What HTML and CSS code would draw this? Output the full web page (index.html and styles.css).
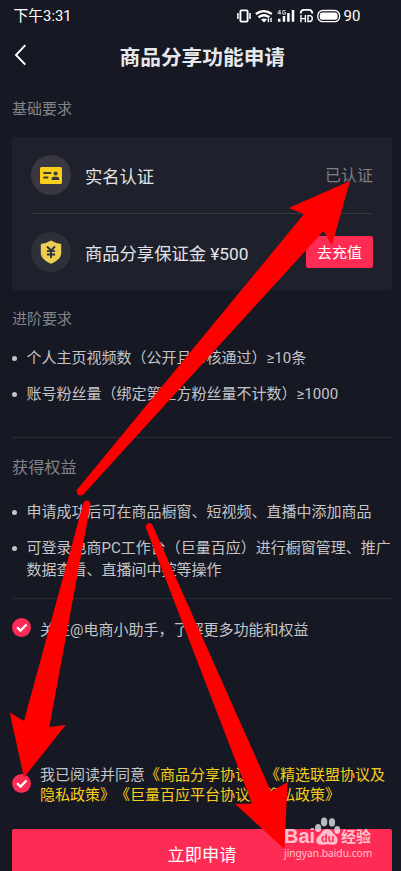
FILE: index.html
```html
<!DOCTYPE html>
<html lang="zh-CN">
<head>
<meta charset="utf-8">
<title>商品分享功能申请</title>
<link rel="stylesheet" href="styles.css">
</head>
<body>
<div class="screen">
  <div class="status">
    <span class="time">下午3:31</span>
    <svg class="status-icons" width="104" height="16" viewBox="0 0 104 16" fill="none" stroke="#fff">
      <rect x="3.400" y="2.400" width="7.200" height="11.200" rx="1" stroke-width="1.900"/>
      <path d="M.9 5v6M13 5v6" stroke-width="1.500"/>
      <path d="M18.800 6q8-5.800 16 0M21.500 9.200q5.500-4 10.800 0" stroke-width="2.300"/>
      <path d="M24 11.500q3-2 6 0l-3 3z" fill="#fff" stroke="none"/>
      <path d="M31.400 14.200v-4M34 9.700v4.200" stroke-width="1.400"/>
      <path d="M42.200 13.700v-3M47 13.700V8M51.400 13.700V5M56 13.700V2" stroke-width="2.500"/>
      <path d="M43 2l-2.200 3.200h3.400M43 2v4.600M48.500 2.600h-2.700v3.600h2.700V4.400h-1.200" stroke-width=".8"/>
      <path d="M63.700 5.600q0-3.700 3.400-3.700h4.800q3.300 0 3.300 3.700" stroke-width="1.900"/>
      <path d="M64 7v7.200M64 10.600h4.200M68.400 7v7.200M71 7.600v5.900h1.500q2.800 0 2.800-2.950t-2.800-2.950z" stroke-width="1.400"/>
      <rect x="80.800" y="2.500" width="21.800" height="11.200" rx="5" stroke-width="1.300"/>
      <rect x="82.800" y="4.400" width="17.800" height="7.400" rx="2.500" fill="#fff" stroke="none"/>
    </svg>
    <span class="battery">90</span>
  </div>

  <header class="nav">
    <svg class="back" width="14" height="22" viewBox="0 0 14 22"><path d="M11.300 1.200L2 11l9.300 9.600" fill="none" stroke="#fff" stroke-width="1.900"/></svg>
    <h1 class="title">商品分享功能申请</h1>
  </header>

  <h2 class="heading basic">基础要求</h2>
  <section class="card">
    <div class="row">
      <span class="badge badge-id">
        <svg width="22" height="17" viewBox="0 0 22 17"><rect width="22" height="17" rx="1.500" fill="#facf1b"/><path d="M3.300 6h8M3.300 10.500h5" stroke="#393840" stroke-width="2"/><circle cx="15.600" cy="6.500" r="2" fill="#393840"/><path d="M11.600 13v-1.300q0-2 2.200-2H17q2.200 0 2.200 2V13z" fill="#393840"/></svg>
      </span>
      <span class="label">实名认证</span>
      <span class="verified">已认证</span>
    </div>
    <div class="row row-deposit">
      <span class="badge">
        <svg width="22" height="24" viewBox="0 0 22 24"><path d="M11 .5Q16 3.600 21.200 4v9.200q0 6.200-10.200 10.600Q.8 19.400.8 13.200V4Q6 3.600 11 .5z" fill="#edcf50"/><path d="M7 6.500l4 4 4-4M6.900 11.100h8.200M6.900 14.500h8.200M11 10.500v7.500" fill="none" stroke="#2e313b" stroke-width="1.900"/></svg>
      </span>
      <span class="label">商品分享保证金 ¥500</span>
      <span class="recharge">去充值</span>
    </div>
  </section>

  <h2 class="heading advanced">进阶要求</h2>
  <ul class="list requirements">
    <li>个人主页视频数（公开且审核通过）≥10条</li>
    <li>账号粉丝量（绑定第三方粉丝量不计数）≥1000</li>
  </ul>

  <h2 class="heading benefits">获得权益</h2>
  <ul class="list gains">
    <li>申请成功后可在商品橱窗、短视频、直播中添加商品</li>
    <li>可登录电商PC工作台（巨量百应）进行橱窗管理、推广<br>数据查看、直播间中控等操作</li>
  </ul>

  <div class="check follow">
    <svg class="tick" width="19" height="19" viewBox="0 0 19 19"><circle cx="9.500" cy="9.500" r="9.400" fill="#fe2c55"/><path d="M5 9.300l3.500 3.300 6-6.200" fill="none" stroke="#fff" stroke-width="2.200"/></svg>
    <p>关注@电商小助手，了解更多功能和权益</p>
  </div>
  <div class="check agree">
    <svg class="tick" width="19" height="19" viewBox="0 0 19 19"><circle cx="9.500" cy="9.500" r="9.400" fill="#fe2c55"/><path d="M5 9.300l3.500 3.300 6-6.200" fill="none" stroke="#fff" stroke-width="2.200"/></svg>
    <p>我已阅读并同意<span class="link">《商品分享协议》《精选联盟协议及<br>隐私政策》《巨量百应平台协议及隐私政策》</span></p>
  </div>
  <div class="submit">立即申请</div>

  <svg class="arrows" width="401" height="871" viewBox="0 0 401 871" fill="#f00">
    <path d="M77.200 489.500L304 214l-15.500-6L350 181l-18.200 64.500L323.500 231 83.500 494.300a4 4 0 0 1-6.300-4.800z"/>
    <path d="M83.300 503a3.700 3.700 0 0 1 7.200 1.200L49.300 727l16.400-2L24 777.500 9.700 712.500 24 721z"/>
    <path d="M145.800 527.500a3.600 3.600 0 0 1 6.600-2.600L271 791.500l16.500-9.300L284.500 849 235 804l17-.600z"/>
  </svg>
  <div class="watermark">
    <div class="brand">
      <span class="bai">Bai</span>
      <span class="paw">
        <svg width="27" height="29" viewBox="0 0 27 29" fill="#fff"><ellipse cx="4.100" cy="11" rx="3.100" ry="4"/><ellipse cx="10.100" cy="5" rx="3.200" ry="4.400"/><ellipse cx="18" cy="5.400" rx="3.100" ry="4.200"/><ellipse cx="23.200" cy="13" rx="3" ry="4"/><path d="M13 12q3.800 0 6 4l3.200 3.300q2.200 2.500 1.300 5.200-1 3.700-5.500 3.300-4.500-1-9 0Q3 28.300 2.300 24q-.4-3 2.600-5.300Q7 17.200 8 15q1.800-3 5-3z"/></svg>
        <span class="du">du</span>
      </span>
      <span class="jy">经验</span>
    </div>
    <div class="url">jingyan.baidu.com</div>
  </div>
</div>
</body>
</html>
```
FILE: styles.css
```css
* { box-sizing: border-box; margin: 0; padding: 0; }

body {
  background: #161823;
  color: #c5c5c8;
  font-family: Roboto, "Noto Sans CJK SC", sans-serif;
  font-size: 15px;
  text-spacing-trim: space-all;
  overflow: hidden;
}

.screen {
  position: relative;
  display: flex;
  flex-direction: column;
  width: 401px;
  height: 871px;
  overflow: hidden;
  white-space: nowrap;
}

.status {
  display: flex;
  align-items: center;
  height: 32px;
  padding-left: 13.500px;
  color: #fff;
  flex: none;
}
.time { width: 223.500px; margin-top: -3px; font-size: 14.800px; }
.status-icons { flex: none; }
.battery { margin-left: 2.500px; font-size: 15px; }

.nav {
  display: flex;
  align-items: center;
  height: 48px;
  padding-left: 14px;
  flex: none;
}
.back { margin-top: -2px; }
.title {
  margin: 3px 0 0 91.500px;
  color: #e8e8ea;
  font-size: 20.700px;
  line-height: 30px;
  font-weight: 700;
}

.heading {
  height: 22px;
  margin-left: 12px;
  color: #838489;
  font-size: 15px;
  font-weight: 400;
  line-height: 22px;
  flex: none;
}
.basic { margin-top: 18px; }

.card {
  width: 380px;
  height: 153px;
  margin: 17px 0 0 12px;
  padding: 0 19px;
  background: #1e202b;
  border-radius: 3px;
  flex: none;
}
.row { display: flex; align-items: center; height: 76px; }
.row-deposit { height: 77px; border-top: 1px solid #343640; }
.badge {
  display: flex;
  align-items: center;
  justify-content: center;
  width: 40px;
  height: 40px;
  margin-right: 14px;
  border-radius: 50%;
  background: #2d3039;
}
.badge-id { background: #393840; }
.label { flex: 1; color: #e3e3e5; font-size: 17.300px; }
.verified { margin-top: -3px; color: #7d7e84; font-size: 16px; }
.recharge {
  width: 67px;
  height: 32px;
  border-radius: 2px;
  background: #fe2c55;
  color: #fff;
  line-height: 34px;
  text-align: center;
}

.advanced { margin-top: 18px; }
.list { list-style: none; margin-left: 12px; line-height: 21.500px; flex: none; }
.list li { display: flow-root; position: relative; padding-left: 14.500px; }
.list li::before {
  content: "";
  float: left;
  width: 5px;
  height: 5px;
  margin: 8px 0 0 -14.500px;
  border-radius: 50%;
  background: #c5c5c8;
}
.list li + li { margin-top: 14.500px; }
.requirements {
  width: 380px;
  height: 90px;
  margin-top: 18px;
  border-bottom: 1px solid #292b35;
}
.benefits { margin-top: 19px; font-size: 16.200px; }
.gains {
  width: 380px;
  height: 97px;
  margin-top: 23px;
  border-bottom: 1px solid #292b35;
}

.check { display: flex; padding-left: 12px; flex: none; }
.check p { margin-left: 9px; }
.tick { flex: none; }
.follow { height: 48px; margin-top: 19px; }
.follow p { font-size: 15px; line-height: 24px; }
.agree { height: 44px; margin-top: 99px; line-height: 19.500px; }
.agree .tick { margin-top: 9px; }
.agree p { padding-top: 1px; }
.link { color: #f8ce1c; }

.submit {
  width: 380px;
  height: 50px;
  margin: 20px 0 0 12px;
  border-radius: 2px;
  background: #fe2c55;
  color: #fff;
  font-size: 17.200px;
  line-height: 52px;
  text-align: center;
  flex: none;
}

.arrows { position: absolute; left: 0; top: 0; }

.watermark {
  position: absolute;
  left: 284px;
  top: 817px;
  color: #fff;
  opacity: .7;
}
.brand { display: flex; align-items: flex-end; height: 29px; }
.bai { width: 30px; font: 700 20px/20px "Liberation Sans", sans-serif; }
.paw { position: relative; width: 27px; height: 29px; }
.du {
  position: absolute;
  left: 7px;
  top: 15px;
  color: #fe2c55;
  font: 700 11px/12px "Liberation Sans", sans-serif;
}
.jy { font: 700 15px/20px "Noto Sans CJK SC", sans-serif; }
.url { margin-top: 1px; font: 10.200px/12px "Noto Sans", sans-serif; }
```
